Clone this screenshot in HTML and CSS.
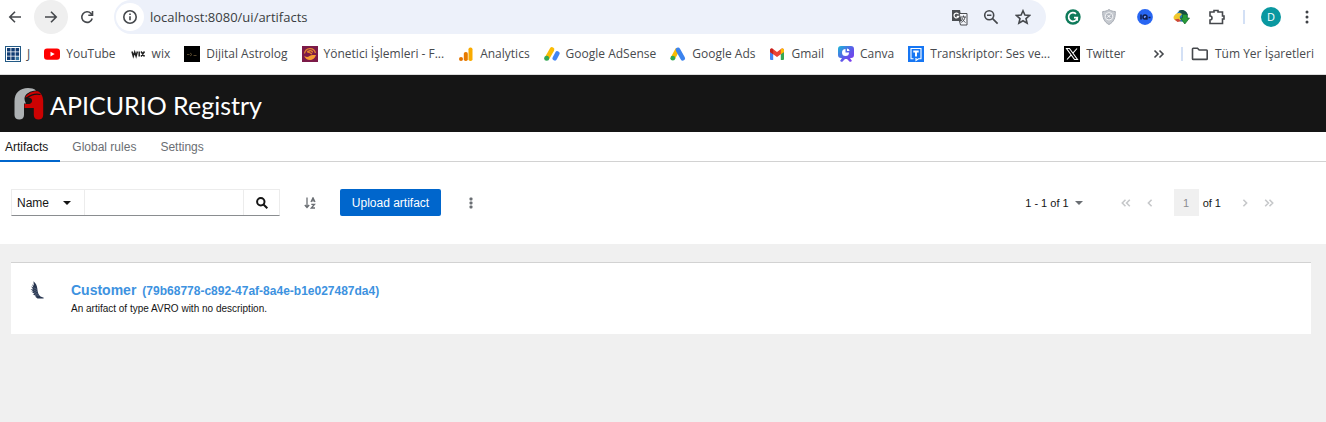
FILE: index.html
```html
<!DOCTYPE html>
<html lang="tr">
<head>
<meta charset="utf-8">
<title>Apicurio Registry</title>
<link rel="stylesheet" href="styles.css">
</head>
<body>
<div class="browser">
  <div class="toolbar">
    <div class="nav-buttons">
      <button class="round" aria-label="Back"><svg width="16" height="16" viewBox="0 0 16 16" class="stroke"><path d="M14 8H3M8 2.8 2.8 8 8 13.200"/></svg></button>
      <button class="round round-active" aria-label="Forward"><svg width="16" height="16" viewBox="0 0 16 16" class="stroke"><path d="M2 8h11M8 2.800 13.200 8 8 13.200"/></svg></button>
      <button class="round" aria-label="Reload"><svg width="16" height="16" viewBox="0 0 16 16" class="stroke"><path d="M13.200 9.500A5.300 5.300 0 1 1 12 4.500L13.500 6M13.500 2v4.300H9.300"/></svg></button>
    </div>
    <div class="omnibox">
      <button class="info" aria-label="Site information"><svg width="16" height="16" viewBox="0 0 16 16" class="stroke"><circle cx="8" cy="8" r="6.200"/><path d="M8 7.300v4M8 4.500v1.500"/></svg></button>
      <input class="url" aria-label="Address" value="localhost:8080/ui/artifacts">
      <button class="omni-icon" aria-label="Translate"><svg width="17" height="17" viewBox="0 0 17 17"><path d="M1 1h8l2 11H1z" fill="#4a4d51"/><path d="M8 4.500h8v11.500H9.500L8.500 12h2z" fill="#f4f6fb" stroke="#4a4d51"/><path d="M7.500 5.200A2.400 2.400 0 1 0 7.700 7.300H5.700" fill="none" stroke="#fff" stroke-width="1.200"/><path d="M10 8h5M12.500 6.500V8M14 8c-.5 2.500-1.500 4-3.500 5.500M11 9c.7 2 2 3.500 3.500 4.500" fill="none" stroke="#4a4d51"/></svg></button>
      <button class="omni-icon" aria-label="Zoom"><svg width="16" height="16" viewBox="0 0 16 16" class="stroke"><circle cx="6.200" cy="6.200" r="4.500"/><path d="m9.600 9.600 5 5M4 6.200h4.400"/></svg></button>
      <button class="omni-icon" aria-label="Bookmark this page"><svg width="16" height="16" viewBox="0 0 16 16" class="stroke"><path d="m8 1.800 1.900 4.300 4.600.4-3.500 3.100 1.100 4.600L8 11.800l-4.100 2.400L5 9.600 1.500 6.500l4.600-.4z"/></svg></button>
    </div>
    <div class="extensions">
      <button class="ext" aria-label="Grammarly"><svg width="16" height="16" viewBox="0 0 16 16"><circle cx="8" cy="8" r="7.700" fill="#0e7a5a"/><path d="M11 4.800A4.400 4.400 0 1 0 12.300 8.700H9M12.200 8.500v3.300" fill="none" stroke="#fff" stroke-width="1.700"/></svg></button>
      <button class="ext" aria-label="Shield"><svg width="14" height="16" viewBox="0 0 14 16"><path d="M7 .5C9 2 11 2.500 13.300 2.500c.2 6-1.300 10.500-6.300 13C2 13 .5 8.500.700 2.500 3 2.500 5 2 7 .5z" fill="#c6cad0" stroke="#a6abb3"/><circle cx="7" cy="7.300" r="3.700" fill="#b1b6be" stroke="#f4f5f7"/><path d="m5.300 8.500 3.400-2.600M5.500 6l3 3" stroke="#fff"/></svg></button>
      <button class="ext" aria-label="IQ"><svg width="16" height="16" viewBox="0 0 16 16"><circle cx="8" cy="8" r="7.900" fill="#2866f2"/><path d="M4 5.500v5M11.500 8.500h2" stroke="#101c48" stroke-width="1.500"/><circle cx="8" cy="8" r="2" fill="#6d97ff" stroke="#101c48" stroke-width="1.500"/><path d="m8.500 8.500 2 2" stroke="#101c48" stroke-width="1.500"/></svg></button>
      <button class="ext" aria-label="Download manager"><svg width="17" height="16" viewBox="0 0 17 16"><circle cx="9" cy="7" r="5.700" fill="#2579b9"/><path d="M5.500 2c3-2.500 8.500-.5 9.300 4L9 5z" fill="#174d42"/><path d="M.7 7.500C2.500 4 6.500 3.300 9 5L6.500 8l1.500 2.500-4 1.200C1.200 11.500 0 9.500.7 7.500z" fill="#f0c82d"/><path d="m1.500 10.500 3 2.500 3.500-.8-2.500-2.400z" fill="#cd4838"/><path d="M9.500 5.500h4.700V9h2.300l-4.700 6L7.500 9h2z" fill="#279c37" stroke="#106425" stroke-width=".7"/></svg></button>
      <button class="ext" aria-label="Extensions"><svg width="18" height="18" viewBox="0 0 18 18" class="stroke"><path d="M2 4h4V2.500h4V4h4.500v4H16v3h-1.500v4.500H2V12a2 2 0 0 0 0-4z"/></svg></button>
      <span class="divider"></span>
      <button class="ext" aria-label="Profile"><span class="avatar">D</span></button>
      <button class="ext" aria-label="Menu"><svg width="4" height="16" viewBox="0 0 4 16" fill="#3f4246"><circle cx="2" cy="3" r="1.500"/><circle cx="2" cy="8" r="1.500"/><circle cx="2" cy="13" r="1.500"/></svg></button>
    </div>
  </div>
  <nav class="bookmarks" aria-label="Bookmarks">
    <a href="#"><svg width="16" height="16" viewBox="0 0 16 16"><path fill="#235a85" d="M0 0h16v16H0z"/><path fill="#fff" d="M1 1h14v14H1z"/><path fill="#123d73" d="M2 2h3.500v3.500H2zM6.300 2h3.500v3.500H6.300zM10.600 2h3.500v3.500h-3.500zM2 6.300h3.500v3.500H2zM6.300 6.300h3.500v3.500H6.300zM10.600 6.300h3.500v3.500h-3.500zM2 10.600h3.500v3.500H2zM6.300 10.600h3.500v3.500H6.300z"/><path fill="#36739d" d="M10.600 10.600h3.500v3.500h-3.500z"/></svg>J</a>
    <a href="#"><svg width="16" height="16" viewBox="0 0 16 16"><rect y="2.500" width="16" height="11.300" rx="3" fill="#f00"/><path d="m6.500 5.700 4.200 2.400-4.200 2.400z" fill="#fff"/></svg>YouTube</a>
    <a href="#"><svg width="16" height="16" viewBox="0 0 16 16" fill="none" stroke="#222" stroke-width="1.500"><path d="m2 5.500 1.300 4.700L4.700 6l1.400 4.200 1.300-4.700M9.200 5.500v5M11 5.500l3.500 5M14.500 5.500l-3.500 5"/></svg>wix</a>
    <a href="#"><svg width="16" height="16" viewBox="0 0 16 16"><path d="M0 0h16v16H0z"/><path d="M3 8.500h2.500M6 7l2 1.500L6 10M9.500 9.500h3" fill="none" stroke="#6a5837" stroke-width=".8"/></svg>Dijital Astrolog</a>
    <a href="#"><svg width="16" height="16" viewBox="0 0 16 16"><path fill="#7c1b48" d="M0 0h16v16H0z"/><path d="M2 9.500c2 2 4 1.500 5.500.500 2-1.400 4-1 6.500-1-1 3.500-3.500 5-6 5s-5-1.500-6-4.500z" fill="#f59c32"/><path d="M2.500 7.500C3.500 1 12 1 13.500 7M6 7c0-3 4.500-3 4.500-.500M5 5l5 3" fill="none" stroke="#e5872d" stroke-width="1.300"/></svg>Yönetici İşlemleri - F...</a>
    <a href="#"><svg width="16" height="16" viewBox="0 0 16 16"><rect x="10.500" y="1.500" width="4" height="13.500" rx="1.800" fill="#f9ab00"/><rect x="5.800" y="6" width="4" height="9" rx="1.800" fill="#e77b00"/><circle cx="3" cy="13" r="2" fill="#e37400"/></svg>Analytics</a>
    <a href="#"><svg width="16" height="16" viewBox="0 0 16 16" fill="none" stroke-linecap="round" stroke-width="4.600"><path d="M8 3.500 4 10.500" stroke="#fbbc04"/><path d="M13.300 7.500 10.800 12.300" stroke="#4285f4"/><circle cx="2.700" cy="12.200" r="2.500" fill="#34a853" stroke="none"/></svg>Google AdSense</a>
    <a href="#"><svg width="16" height="16" viewBox="0 0 16 16" fill="none" stroke-linecap="round" stroke-width="4.600"><path d="M7 4.500 3.500 11" stroke="#fbbc04"/><path d="m8 3.800 4.800 8.500" stroke="#3c83ee"/><circle cx="2.800" cy="12.200" r="2.400" fill="#34a853" stroke="none"/></svg>Google Ads</a>
    <a href="#"><svg width="16" height="16" viewBox="0 0 16 16"><path d="M1 4.500h3.200V14H2q-1 0-1-1z" fill="#4285f4"/><path d="M11.800 4.500H15V13q0 1-1 1h-2.200z" fill="#34a853"/><path d="M1 6V4.300C1 2.700 2.700 2 4 3l4 3 4-3c1.300-1 3-.3 3 1.300V6l-7 5z" fill="#ea4335"/><path d="M11.800 3.200c1.500-1.200 3.200-.4 3.200 1.100V6l-3.200 2.300z" fill="#fbbc04"/><path d="M1 4.300C1 2.800 2.700 2 4.200 3.200v5.100L1 6z" fill="#c5221f"/></svg>Gmail</a>
    <a href="#"><svg width="16" height="16" viewBox="0 0 16 16"><defs><linearGradient id="canva" x1="0" y1="0" x2="1" y2="1"><stop stop-color="#1bb9d7"/><stop offset=".5" stop-color="#595ee8"/><stop offset="1" stop-color="#8432ef"/></linearGradient></defs><path d="M3 0h10q3 0 3 3v6q0 3-3 3h-1l2 3-2 1-3-3H7l-3 3-2-1 2-3H3q-3 0-3-3V3q0-3 3-3z" fill="url(#canva)"/><path d="M7.500 3v3.500H11A3.500 3.500 0 1 1 7.500 3z" fill="#fff"/><path d="M9 2.500A3 3 0 0 1 11.700 5H9z" fill="#fff"/></svg>Canva</a>
    <a href="#"><svg width="16" height="16" viewBox="0 0 16 16"><path fill="#1676f3" d="M0 0h16v16H0z"/><path d="M5.500 12.800H3V2.500h10v10.300h-2.500L8 14.500v-2.500" fill="none" stroke="#fff" stroke-width="1.100"/><path d="M5.300 5.500h5.400M8 5.500v5" fill="none" stroke="#fff" stroke-width="2"/></svg>Transkriptor: Ses ve...</a>
    <a href="#"><svg width="16" height="16" viewBox="0 0 16 16"><path d="M0 0h16v16H0z"/><path d="M2.500 2.500h3l8 11h-3zM13 2.500 8.700 7.300M7 9.200l-4 4.300" fill="none" stroke="#fff" stroke-width="1.100"/></svg>Twitter</a>
    <div class="bookmarks-end">
      <button class="more" aria-label="More bookmarks"><svg width="12" height="12" viewBox="0 0 12 12" class="stroke"><path d="m1.500 2.500 3.500 3.500-3.500 3.500M6.500 2.500 10 6l-3.500 3.500"/></svg></button>
      <span class="divider"></span>
      <a href="#"><svg width="18" height="16" viewBox="0 0 18 16" class="stroke"><path d="M1.500 3q0-.7.700-.7h4.300L8.200 4h7.300q.7 0 .7.700v8q0 .7-.7.700H2.200q-.7 0-.7-.7z"/></svg>Tüm Yer İşaretleri</a>
    </div>
  </nav>
</div>

<header class="masthead">
  <svg width="30" height="34" viewBox="0 0 30 34"><path d="M.5 14C.5 6 6 1 14 1c3 0 6 .700 8 2.500-6 .5-10 3-11.300 6.500-.700 2 .3 4.500 1.300 6.500h-2V28c0 3-2 4.500-4.700 4.500S.5 31 .5 28z" fill="#adb1b3"/><path d="M11 10.500C14 6 19 3.800 24 4.300c3 1.500 5.200 5.200 5.200 9.700v14c0 3-2 4.500-4.700 4.500S19.800 31 19.800 28v-7h-9.300v-4h3.800c2.700 0 4.200-2 3.700-4-.4-2-3.500-3-7-2.500z" fill="#cc0202"/><path d="M12.500 11c5-3.800 9-4.800 14-3.500" fill="none" stroke="#151515" stroke-width="1.200"/></svg>
  <span class="brand">APICURIO Registry</span>
</header>

<nav class="tabs" aria-label="Registry">
  <a class="tab tab-current" href="#">Artifacts</a>
  <a class="tab" href="#">Global rules</a>
  <a class="tab" href="#">Settings</a>
</nav>

<section class="filters">
  <div class="search">
    <button class="search-type">Name <span class="caret"></span></button>
    <input class="search-text" type="text" aria-label="Filter by name">
    <button class="search-go" aria-label="Search"><svg width="12" height="12" viewBox="0 0 12 12" fill="none" stroke="#151515" stroke-width="2"><circle cx="4.800" cy="4.800" r="3.700"/><path d="m7.500 7.500 3.800 3.800"/></svg></button>
  </div>
  <button class="plain sort" aria-label="Sort"><svg width="12" height="12" viewBox="0 0 12 12" fill="none" stroke="#6a6e73" stroke-width="1.300"><path d="M3 .5v10M.8 8 3 10.500 5.200 8M7 5l2-4.200L11 5M7.700 3.800h2.600M7.300 7.300h3.200L7.300 11H11"/></svg></button>
  <button class="upload">Upload artifact</button>
  <button class="plain kebab" aria-label="Actions"><svg width="4" height="12" viewBox="0 0 4 12" fill="#6a6e73"><rect x=".5" y=".5" width="3" height="3" rx="1"/><rect x=".5" y="4.500" width="3" height="3" rx="1"/><rect x=".5" y="8.500" width="3" height="3" rx="1"/></svg></button>
  <div class="pager">
    <button class="plain range">1 - 1 of 1 <span class="caret caret-grey"></span></button>
    <div class="pager-step">
      <button class="plain step" aria-label="First page"><svg width="10" height="8" viewBox="0 0 10 8"><path d="M4.500.8 1.300 4l3.200 3.200M8.800.8 5.600 4l3.200 3.200"/></svg></button>
      <button class="plain step" aria-label="Previous page"><svg width="10" height="8" viewBox="0 0 10 8"><path d="M6.600.8 3.400 4l3.200 3.200"/></svg></button>
    </div>
    <label class="page"><input class="page-number" value="1" aria-label="Current page" disabled>of 1</label>
    <div class="pager-step">
      <button class="plain step" aria-label="Next page"><svg width="10" height="8" viewBox="0 0 10 8"><path d="M3.400.8 6.600 4 3.400 7.200"/></svg></button>
      <button class="plain step" aria-label="Last page"><svg width="10" height="8" viewBox="0 0 10 8"><path d="M1.200.8 4.400 4 1.200 7.200M5.500.8 8.700 4 5.500 7.200"/></svg></button>
    </div>
  </div>
</section>

<main class="content">
  <article class="card">
    <svg class="card-icon" width="16" height="18" viewBox="0 0 16 18"><path d="M3.500.3C5.500 2 7 4.500 7.300 7.500c.3 3.500 1 6.500 3.200 8l3.300 1.300-.3.700H7.500L5 15.500l1.500-.3-3.800-2 2-.2L1.200 10.600l2.300.1L.6 8l2.600.5L1 5.300l2.200 1.200L2.200 3.300l1.600 1.400z" fill="#283650"/><path d="m3.500 6.700 3.500 1.800M3.500 8.800l3.800 2M3.700 10.900l4 2M5 13.200l3.800 1.600" stroke="#8995aa" stroke-width=".4"/></svg>
    <div>
      <a class="card-title" href="#"><span>Customer</span><span class="card-id">(79b68778-c892-47af-8a4e-b1e027487da4)</span></a>
      <p class="card-text">An artifact of type AVRO with no description.</p>
    </div>
  </article>
</main>
</body>
</html>
```

FILE: styles.css
```css
* { box-sizing: border-box; }
html, body { height: 100%; }
body {
  margin: 0;
  display: flex;
  flex-direction: column;
  background: #fff;
  color: #151515;
  font: 12px/18px "Liberation Sans", Arial, sans-serif;
}
button, input { font: inherit; color: inherit; margin: 0; padding: 0; border: 0; background: none; }
a { color: inherit; text-decoration: none; }
svg { display: block; flex: none; }
.stroke { fill: none; stroke: #45484c; stroke-width: 1.6; }

/* Browser chrome */
.browser {
  border-bottom: 1px solid #dcdcdc;
  color: #474a4e;
  font-family: "Open Sans", "Noto Sans", sans-serif;
}
.toolbar { display: flex; height: 34px; }
.nav-buttons { display: flex; gap: 2px; margin-left: -2px; padding-right: 10px; }
.round, .info, .omni-icon, .ext { display: grid; place-items: center; }
.round { width: 34px; border-radius: 50%; }
.round-active { background: #efefef; }
.omnibox {
  flex: 1;
  display: flex;
  align-items: center;
  padding: 0 7px 0 2px;
  border-radius: 17px;
  background: #edf1fa;
}
.info { width: 28px; height: 28px; border-radius: 50%; background: #fff; }
.url { flex: 1; min-width: 0; padding-left: 6px; color: #3a3d41; font-size: 13px; }
.omni-icon { width: 32px; height: 32px; }
.extensions { display: flex; align-items: center; padding: 0 1px 0 9px; }
.ext { width: 36px; height: 34px; }
.divider { width: 2px; height: 14px; margin: 0 8px; background: #d3e0f5; }
.avatar {
  width: 20px;
  border-radius: 50%;
  background: #0a98a0;
  color: #fff;
  font-size: 11px;
  line-height: 20px;
}
.bookmarks { display: flex; align-items: center; gap: 14px; height: 40px; padding: 0 12px 0 5px; white-space: nowrap; }
.bookmarks a { display: flex; align-items: center; gap: 6px; }
.bookmarks-end { display: flex; align-items: center; margin-left: auto; }
.more { margin-right: 8px; }

/* Application header */
.masthead {
  display: flex;
  align-items: center;
  gap: 6px;
  height: 57px;
  padding-left: 14px;
  background: #151515;
  color: #fff;
}
.brand { font: 25px/32px Lato, sans-serif; padding-top: 3px; }
.tabs { display: flex; height: 30px; border-bottom: 1px solid #d2d2d2; }
.tab { height: 30px; padding: 0 12px; line-height: 30px; color: #6a6e73; }
.tab-current { padding-left: 5px; border-bottom: 2px solid #06c; color: #151515; }

/* Filter row */
.filters { display: flex; align-items: center; padding: 27px 45px 28px 11px; }
.search { display: flex; width: 269px; height: 27px; border: 1px solid #ececec; border-bottom-color: #8a8d90; }
.search-type { display: flex; align-items: center; gap: 14px; width: 73px; padding-left: 5px; border-right: 1px solid #ececec; }
.search-text { flex: 1; min-width: 0; }
.search-go { display: grid; place-items: center; width: 36px; border-left: 1px solid #ececec; }
.caret { border: 4px solid transparent; border-top-color: currentColor; border-bottom: 0; }
.caret-grey { color: #6a6e73; }
.plain { display: grid; place-items: center; height: 27px; }
.sort, .kebab { width: 60px; }
.upload { width: 101px; height: 27px; border-radius: 2px; background: #06c; color: #fff; }
.pager { display: flex; align-items: center; margin-left: auto; font-size: 11px; }
.range { display: flex; align-items: center; gap: 6px; margin-right: 31px; }
.pager-step { display: flex; }
.step { width: 24px; fill: none; stroke: #c6c8ca; stroke-width: 1.6; }
.page { display: flex; align-items: center; gap: 4px; margin: 0 12px; }
.page-number { width: 25px; height: 27px; background: #f0f0f0; color: #8a8d90; text-align: center; }

/* Artifact list */
.content { flex: 1; padding: 18px 15px 18px 11px; background: #f0f0f0; }
.card { display: flex; gap: 25px; padding: 18px 18px 16px; border-top: 1px solid #d2d2d2; background: #fff; }
.card-icon { margin-left: 1px; }
.card-title { display: flex; align-items: baseline; gap: 6px; color: #3d92e0; font-weight: bold; font-size: 14px; }
.card-id { font-size: 12px; }
.card-text { margin: 0; font-size: 10px; }
```
